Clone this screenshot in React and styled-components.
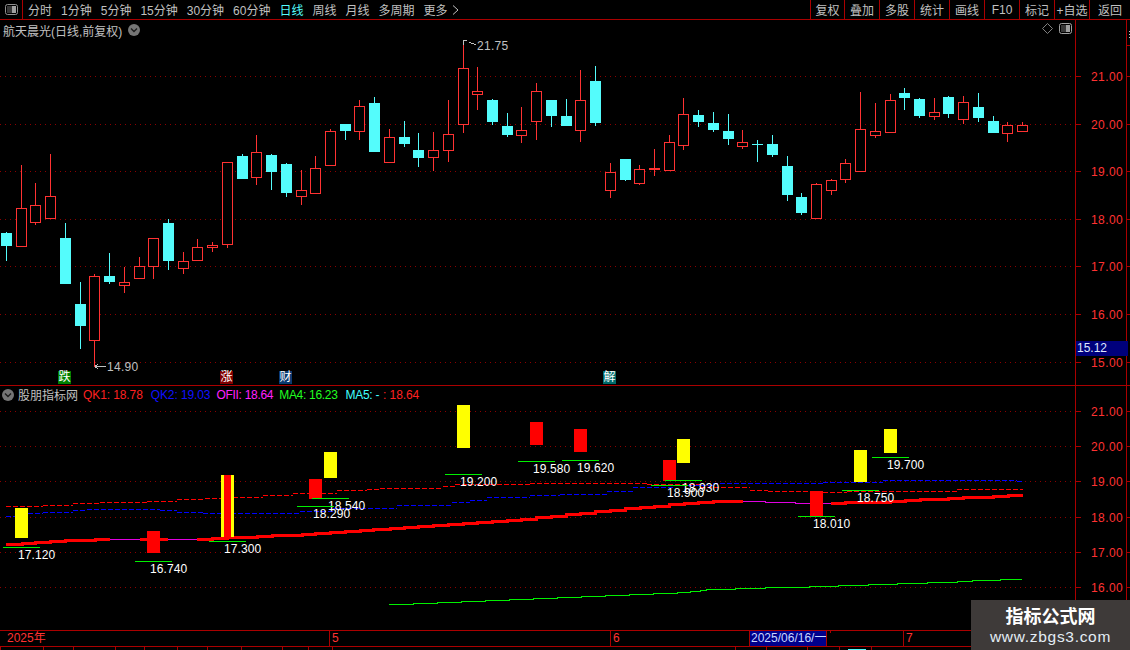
import React from 'react';
import styled, { createGlobalStyle } from 'styled-components';

const RED_LINE = '#aa0000';
const UP = '#ff3232';
const DOWN = '#54fcfc';
const GREY = '#c0c0c0';

const GlobalStyle = createGlobalStyle`
  html, body { margin: 0; padding: 0; background: #000; overflow: hidden; }
  body { font-family: "Liberation Sans", "Noto Sans CJK SC", sans-serif; }
`;

const Page = styled.div`
  position: relative;
  width: 1130px;
  height: 650px;
  display: flex;
  flex-direction: column;
  background: #000;
  overflow: hidden;
  font-size: 12px;
  color: ${GREY};
`;

// top toolbar
const Toolbar = styled.div`
  height: 19px;
  flex: none;
  display: flex;
  align-items: center;
  border-bottom: 1px solid ${RED_LINE};
`;

const IconCell = styled.div`
  width: 23px;
  height: 19px;
  display: flex;
  align-items: center;
  justify-content: center;
  border-right: 1px solid ${RED_LINE};
  box-sizing: border-box;
`;

const PeriodList = styled.div`
  display: flex;
  align-items: center;
  gap: 9px;
  padding-left: 5px;
  flex: 1;
`;

const Period = styled.span`
  color: ${p => (p.$active ? DOWN : GREY)};
  white-space: nowrap;
  display: flex;
  align-items: center;
  gap: 4px;
`;

const ToolButton = styled.div`
  width: ${p => p.$w}px;
  height: 19px;
  box-sizing: border-box;
  display: flex;
  align-items: center;
  justify-content: center;
  border-left: 1px solid ${RED_LINE};
  white-space: nowrap;
`;

// chart panels
const Panel = styled.div`
  position: relative;
  flex: none;
  height: ${p => p.$h}px;
  display: flex;
  border-bottom: 1px solid ${RED_LINE};
`;

const Plot = styled.svg`
  display: block;
  width: 1075px;
  height: 100%;
  flex: none;
  shape-rendering: crispEdges;
`;

const Axis = styled.svg`
  display: block;
  width: 55px;
  height: 100%;
  flex: none;
  shape-rendering: crispEdges;
`;

const ChartText = styled.text`
  font-family: "Liberation Sans", sans-serif;
  font-size: 12px;
  letter-spacing: ${p => p.$sp || 0}px;
  fill: ${p => p.$color || '#fff'};
  shape-rendering: auto;
`;

const TitleBar = styled.div`
  position: absolute;
  left: 3px;
  top: 1px;
  height: 18px;
  display: flex;
  align-items: center;
  gap: 6px;
  white-space: nowrap;
`;

const CornerIcons = styled.div`
  position: absolute;
  left: 1042px;
  top: 3px;
  display: flex;
  align-items: center;
  gap: 6px;
`;

const Legend = styled.div`
  position: absolute;
  left: 2px;
  top: 0;
  height: 17px;
  display: flex;
  align-items: center;
  white-space: nowrap;
`;

const LegendName = styled.span`
  margin: 0 5px 0 4px;
`;

const LegendValue = styled.span`
  color: ${p => p.$color};
  margin-right: ${p => p.$gap}px;
  letter-spacing: ${p => p.$sp || -0.1}px;
`;

const Tag = styled.div`
  position: absolute;
  left: ${p => p.$left}px;
  top: 351px;
  width: 13px;
  height: 13px;
  display: flex;
  align-items: center;
  justify-content: center;
  background: ${p => p.$bg};
  color: #fff;
  font-size: 12px;
  line-height: 13px;
`;

const PriceBox = styled.div`
  position: absolute;
  left: 1076px;
  top: 321px;
  width: 52px;
  height: 15px;
  padding-left: 1px;
  box-sizing: border-box;
  background: #00007c;
  color: #dfe8ff;
  line-height: 15px;
`;

// time axis
const TimeAxis = styled.div`
  height: 15px;
  flex: none;
  display: flex;
  border-bottom: 1px solid ${RED_LINE};
`;

const TimeCell = styled.div`
  width: ${p => p.$w}px;
  flex: none;
  box-sizing: border-box;
  padding-left: ${p => (p.$first ? 7 : 2)}px;
  border-left: ${p => (p.$first || p.$plain ? 0 : 1)}px solid ${RED_LINE};
  color: ${UP};
  line-height: 15px;
  white-space: nowrap;
  background: ${p => (p.$plain ? `linear-gradient(${RED_LINE}, ${RED_LINE}) 3px 0 / 1px 2px no-repeat` : 'none')};
`;

const DateCell = styled.div`
  width: 78px;
  flex: none;
  box-sizing: border-box;
  padding-left: 1px;
  background: #00008c;
  border-left: 1px solid ${RED_LINE};
  border-right: 1px solid ${RED_LINE};
  color: #c8d8ff;
  line-height: 15px;
  white-space: nowrap;
`;

const TabStrip = styled.div`
  height: 3px;
  flex: none;
  display: flex;
`;

const Tab = styled.div`
  width: ${p => p.$w}px;
  flex: none;
  box-sizing: border-box;
  border-left: 1px solid ${RED_LINE};
  background: ${p => (p.$active ? `linear-gradient(${DOWN}, ${DOWN}) 8px 2px / 18px 1px no-repeat` : 'none')};
`;

const Watermark = styled.div`
  position: absolute;
  left: 971px;
  top: 600px;
  width: 159px;
  height: 50px;
  padding-bottom: 2px;
  box-sizing: border-box;
  background: #3e3a39;
  display: flex;
  flex-direction: column;
  align-items: center;
  justify-content: center;
  gap: 1px;
`;

const WatermarkTitle = styled.div`
  color: #fff;
  font-size: 18px;
  font-weight: 700;
  line-height: 24px;
  font-family: "Noto Sans CJK SC", sans-serif;
`;

const WatermarkUrl = styled.div`
  color: #e4edf5;
  font-size: 15.5px;
  line-height: 18px;
  letter-spacing: 0.7px;
`;

// [x, high, bodyTop, bodyBottom, low, kind]  r = hollow red, c = solid cyan
const candles = [
  [6, 232, 233, 246, 261, 'c'], [21, 165, 208, 247, 247, 'r'], [35, 183, 205, 223, 225, 'r'],
  [50, 154, 196, 219, 219, 'r'], [65, 223, 238, 284, 284, 'c'], [80, 282, 304, 326, 349, 'c'],
  [94, 274, 276, 341, 367, 'r'], [109, 253, 276, 282, 284, 'c'], [124, 267, 282, 286, 293, 'r'],
  [139, 257, 266, 279, 279, 'r'], [153, 238, 238, 267, 279, 'r'], [168, 219, 223, 261, 270, 'c'],
  [183, 252, 261, 269, 274, 'r'], [197, 239, 247, 261, 261, 'r'], [212, 242, 245, 248, 252, 'r'],
  [227, 162, 162, 245, 248, 'r'], [242, 154, 156, 179, 179, 'c'], [256, 135, 152, 178, 185, 'r'],
  [271, 154, 155, 172, 190, 'c'], [286, 163, 164, 193, 197, 'c'], [301, 170, 190, 197, 205, 'r'],
  [315, 156, 168, 194, 194, 'r'], [330, 129, 131, 166, 166, 'r'], [345, 124, 124, 131, 140, 'c'],
  [359, 100, 106, 132, 140, 'r'], [374, 97, 103, 152, 152, 'c'], [389, 129, 137, 163, 163, 'r'],
  [404, 121, 137, 144, 147, 'c'], [418, 133, 150, 158, 167, 'c'], [433, 132, 150, 158, 171, 'r'],
  [448, 100, 134, 151, 162, 'r'], [463, 40, 68, 125, 133, 'r'], [477, 67, 91, 95, 110, 'r'],
  [492, 99, 100, 122, 125, 'c'], [507, 113, 126, 135, 137, 'c'], [521, 107, 130, 136, 143, 'r'],
  [536, 83, 91, 122, 140, 'r'], [551, 100, 100, 116, 127, 'c'], [566, 99, 116, 126, 126, 'c'],
  [580, 70, 100, 131, 142, 'r'], [595, 66, 81, 123, 126, 'c'], [610, 163, 172, 191, 198, 'r'],
  [625, 159, 159, 180, 181, 'c'], [639, 165, 169, 184, 185, 'r'], [654, 149, 168, 170, 176, 'r'],
  [669, 135, 142, 171, 171, 'r'], [683, 98, 114, 146, 150, 'r'], [698, 110, 115, 122, 127, 'c'],
  [713, 112, 123, 130, 132, 'c'], [728, 114, 131, 139, 145, 'c'], [742, 130, 142, 147, 149, 'r'],
  [757, 140, 144, 145, 162, 'c'], [772, 135, 144, 155, 157, 'c'], [787, 156, 166, 195, 201, 'c'],
  [801, 193, 197, 213, 215, 'c'], [816, 183, 184, 219, 219, 'r'], [831, 179, 180, 191, 195, 'r'],
  [845, 159, 163, 180, 183, 'r'], [860, 92, 129, 172, 172, 'r'], [875, 103, 131, 136, 138, 'r'],
  [890, 94, 100, 133, 133, 'r'], [904, 88, 93, 98, 110, 'c'], [919, 98, 99, 116, 118, 'c'],
  [934, 98, 112, 117, 120, 'r'], [948, 96, 97, 114, 118, 'c'], [963, 96, 102, 120, 124, 'r'],
  [978, 93, 107, 118, 122, 'c'], [993, 116, 121, 133, 133, 'c'], [1007, 122, 125, 134, 142, 'r'],
  [1022, 122, 125, 132, 132, 'r'],
];

const mainTicks = [[76, '21.00'], [124, '20.00'], [171, '19.00'], [219, '18.00'], [266, '17.00'], [314, '16.00'], [362, '15.00']];
const subTicks = [[411, '21.00'], [446, '20.00'], [481, '19.00'], [517, '18.00'], [552, '17.00'], [587, '16.00']];

// [x, y] vertices of a stepped line, last entry only closes the line
const thickRuns = [
  [[6, 544], [22, 543], [35, 542], [50, 541], [65, 540], [95, 539], [110, 539]],
  [[140, 539], [147, 539]],
  [[160, 539], [168, 539]],
  [[197, 539], [212, 538], [227, 537], [257, 536], [272, 535], [302, 534], [315, 533], [330, 532], [345, 531], [360, 530], [373, 529],
    [390, 528], [404, 527], [418, 526], [433, 525], [448, 524], [463, 523], [477, 522], [492, 521], [507, 520], [521, 519], [536, 517],
    [551, 516], [566, 514], [580, 513], [595, 511], [610, 510], [625, 508], [640, 507], [654, 506], [669, 504], [684, 503], [698, 502], [713, 501], [743, 501]],
  [[831, 503], [845, 502], [890, 501], [905, 500], [920, 499], [948, 498], [963, 497], [993, 496], [1008, 495], [1023, 495]],
];
const magentaRuns = [
  [[110, 539], [140, 539]],
  [[168, 539], [197, 539]],
  [[743, 501], [765, 502], [795, 503], [810, 503]],
  [[823, 503], [831, 503]],
];
const redDash = [[6, 506], [43, 505], [73, 503], [100, 502], [147, 501], [177, 499], [205, 498], [233, 497], [263, 495], [293, 493], [337, 490], [367, 489], [380, 488],
  [443, 486], [455, 484], [530, 483], [647, 484], [700, 487], [750, 490], [768, 491], [823, 492], [847, 491], [957, 489], [1023, 489]];
const blueDash = [[6, 516], [28, 513], [43, 512], [73, 510], [87, 509], [160, 510], [177, 512], [203, 513], [300, 511], [333, 508], [397, 505], [452, 502], [470, 500], [487, 497],
  [530, 495], [560, 494], [607, 491], [633, 487], [673, 485], [713, 483], [823, 482], [883, 480], [1017, 481], [1023, 481]];
const greenLine = [[389, 604], [413, 603], [437, 602], [461, 601], [485, 600], [509, 599], [533, 598], [557, 597], [581, 596], [605, 595], [629, 594], [653, 593], [677, 592], [690, 591],
  [700, 590], [706, 589], [735, 588], [765, 587], [809, 586], [838, 585], [868, 584], [897, 583], [927, 582], [957, 581], [972, 580], [1000, 579], [1022, 579]];

// [x, y, w, h, colour]
const bars = [
  [15, 508, 13, 30, '#ffff00'], [147, 531, 13, 22, '#ff0000'], [221, 475, 13, 62, '#ffff00'], [224, 475, 7, 62, '#ff0000'],
  [309, 479, 13, 20, '#ff0000'], [324, 452, 13, 26, '#ffff00'], [457, 405, 13, 43, '#ffff00'], [530, 422, 13, 23, '#ff0000'],
  [574, 429, 13, 23, '#ff0000'], [663, 460, 13, 21, '#ff0000'], [677, 439, 13, 24, '#ffff00'], [810, 491, 13, 26, '#ff0000'],
  [854, 450, 13, 32, '#ffff00'], [884, 429, 13, 24, '#ffff00'],
];

// [lineX1, lineX2, lineY, textX, text]
const marks = [
  [3, 40, 547, 18, '17.120'], [135, 172, 561, 150, '16.740'], [209, 246, 541, 224, '17.300'], [312, 349, 498, 328, '18.540'],
  [297, 334, 506, 313, '18.290'], [445, 482, 474, 460, '19.200'], [518, 555, 461, 533, '19.580'], [562, 599, 460, 577, '19.620'],
  [665, 702, 480, 682, '18.930'], [651, 688, 485, 667, '18.900'], [798, 835, 516, 813, '18.010'], [842, 879, 490, 857, '18.750'],
  [872, 909, 457, 887, '19.700'],
];

const stepPath = pts => pts.map(([x, y], i) => (i === 0 ? `M${x} ${y + 0.5}` : `H${x}V${y + 0.5}`)).join('');

// dashes as solid 1px pieces, 5 on 2 off, following the steps of the line
const dashPieces = pts => {
  const pieces = [];
  for (let i = 0; i < pts.length - 1; i++) {
    const [x1, y] = pts[i];
    const x2 = pts[i + 1][0];
    for (let x = x1; x < x2; x += 7) pieces.push([x, y, Math.min(5, x2 - x)]);
  }
  return pieces;
};

const DashLine = ({ points, color }) =>
  dashPieces(points).map(([x, y, w]) => <rect key={x} x={x} y={y} width={w} height="1" fill={color} />);

const PanelIcon = ({ bright }) => (
  <svg width="13" height="11" viewBox="0 0 13 11">
    <rect x="0.5" y="0.5" width="12" height="10" rx="2" fill="#000" stroke={bright ? '#a0a0a0' : '#909090'} />
    <rect x="7" y="2" width="4" height="7" fill="#a0a0a0" />
    <rect x="2" y="2" width="5" height="7" fill="#383838" />
  </svg>
);

const RoundArrow = () => (
  <svg width="12" height="12" viewBox="0 0 12 12">
    <circle cx="6" cy="6" r="6" fill="#757575" />
    <path d="M3 4.5L6 7.5L9 4.5" fill="none" stroke="#1c1c1c" strokeWidth="1.4" />
  </svg>
);

const Candle = ({ c }) => {
  const [x, high, top, bottom, low, kind] = c;
  const color = kind === 'r' ? UP : DOWN;
  return (
    <g>
      <rect x={x} y={high} width="1" height={low - high} fill={color} />
      {kind === 'r' ? (
        <rect x={x - 4.5} y={top + 0.5} width="10" height={bottom - top - 1} fill="#000" stroke={color} />
      ) : (
        <rect x={x - 5} y={top} width="11" height={bottom - top} fill={color} />
      )}
    </g>
  );
};

const GridLines = ({ ticks }) =>
  ticks.map(([y]) => <line key={y} x1="0" x2="1075" y1={y + 0.5} y2={y + 0.5} stroke="#8c0000" strokeDasharray="1 4" />);

const AxisTicks = ({ ticks }) => (
  <>
    <rect x="1075" y="0" width="1" height="650" fill={RED_LINE} />
    <rect x="1126" y="0" width="1" height="650" fill={RED_LINE} />
    {ticks.map(([y, label]) => (
      <g key={y}>
        <rect x="1075" y={y} width="6" height="1" fill={RED_LINE} />
        <rect x="1126" y={y} width="4" height="1" fill={RED_LINE} />
        <ChartText x="1091" y={y + 5} $color={UP} $sp={0.4}>{label}</ChartText>
      </g>
    ))}
  </>
);

const periods = ['分时', '1分钟', '5分钟', '15分钟', '30分钟', '60分钟', '日线', '周线', '月线', '多周期'];
const tools = [['复权', 34], ['叠加', 35], ['多股', 35], ['统计', 35], ['画线', 35], ['F10', 35], ['标记', 35], ['+自选', 35], ['返回', 41]];
const tabs = [43, 30, 42, 29, 33, 30, 34, 41, 26, 24, 403, 31, 41, 32, 32, 259];
const ACTIVE_TAB = 14;

export default function App() {
  return (
    <Page>
      <GlobalStyle />
      <Toolbar>
        <IconCell><PanelIcon /></IconCell>
        <PeriodList>
          {periods.map(p => <Period key={p} $active={p === '日线'}>{p}</Period>)}
          <Period>
            更多
            <svg width="7" height="10" viewBox="0 0 7 10">
              <path d="M1 0.5L6 5L1 9.5" fill="none" stroke={GREY} />
            </svg>
          </Period>
        </PeriodList>
        {tools.map(([t, w]) => <ToolButton key={t} $w={w}>{t}</ToolButton>)}
      </Toolbar>

      <Panel $h={365}>
        <Plot viewBox="0 20 1075 365">
          <GridLines ticks={mainTicks} />
          {candles.map(c => <Candle key={c[0]} c={c} />)}
          <path d="M463.5 40L463.5 45M464 40.5H467M469 42L472 43.5L476 44.5" fill="none" stroke={GREY} />
          <ChartText x="477" y="50" $color={GREY} $sp={0.3}>21.75</ChartText>
          <path d="M95 366.5H106M95 366.5L98 364M95 366.5L98 369" fill="none" stroke={GREY} />
          <ChartText x="107" y="371" $color={GREY} $sp={0.3}>14.90</ChartText>
        </Plot>
        <Axis viewBox="1075 20 55 365">
          <AxisTicks ticks={mainTicks} />
          <rect x="1129" y="31" width="1" height="1" fill={GREY} />
          <rect x="1129" y="34" width="1" height="1" fill={GREY} />
          <rect x="1129" y="37" width="1" height="1" fill={GREY} />
          <rect x="1126" y="45" width="4" height="1" fill={RED_LINE} />
        </Axis>
        <TitleBar>
          航天晨光(日线,前复权)
          <RoundArrow />
        </TitleBar>
        <CornerIcons>
          <svg width="11" height="11" viewBox="0 0 11 11">
            <path d="M5.5 0.5L10.5 5.5L5.5 10.5L0.5 5.5Z" fill="none" stroke="#808080" />
          </svg>
          <PanelIcon bright />
        </CornerIcons>
        <Tag $left={58} $bg="#008000">跌</Tag>
        <Tag $left={220} $bg="#800000">涨</Tag>
        <Tag $left={279} $bg="#0a3a70">财</Tag>
        <Tag $left={603} $bg="#006a6a">解</Tag>
        <PriceBox>15.12</PriceBox>
      </Panel>

      <Panel $h={244}>
        <Plot viewBox="0 386 1075 244">
          <GridLines ticks={subTicks} />
          <DashLine points={redDash} color="#ff0000" />
          <DashLine points={blueDash} color="#0000ff" />
          <path d={stepPath(greenLine)} fill="none" stroke="#00f000" />
          {magentaRuns.map((r, i) => <path key={i} d={stepPath(r)} fill="none" stroke="#e000e0" />)}
          {thickRuns.map((r, i) => <path key={i} d={stepPath(r)} fill="none" stroke="#ff0000" strokeWidth="3" />)}
          {bars.map(([x, y, w, h, color], i) => <rect key={i} x={x} y={y} width={w} height={h} fill={color} />)}
          {marks.map(([x1, x2, y, tx, text]) => (
            <g key={text}>
              <rect x={x1} y={y} width={x2 - x1} height="1" fill="#00f000" />
              <ChartText x={tx} y={y + 12} $sp={0.1}>{text}</ChartText>
            </g>
          ))}
        </Plot>
        <Axis viewBox="1075 386 55 244">
          <AxisTicks ticks={subTicks} />
        </Axis>
        <Legend>
          <RoundArrow />
          <LegendName>股朋指标网</LegendName>
          <LegendValue $color="#ff2020" $gap={8}>QK1: 18.78</LegendValue>
          <LegendValue $color="#1010ff" $gap={6}>QK2: 19.03</LegendValue>
          <LegendValue $color="#ff20ff" $gap={6} $sp={-0.3}>OFII: 18.64</LegendValue>
          <LegendValue $color="#20ff20" $gap={8} $sp={-0.3}>MA4: 16.23</LegendValue>
          <LegendValue $color="#40ffff" $gap={4} $sp={-0.3}>MA5: -</LegendValue>
          <LegendValue $color="#ff2020" $gap={0}>: 18.64</LegendValue>
        </Legend>
      </Panel>

      <TimeAxis>
        <TimeCell $first $w={329}>2025年</TimeCell>
        <TimeCell $w={281}>5</TimeCell>
        <TimeCell $w={139}>6</TimeCell>
        <DateCell>2025/06/16/一</DateCell>
        <TimeCell $plain $w={76} />
        <TimeCell $w={228}>7</TimeCell>
      </TimeAxis>
      <TabStrip>
        {tabs.map((w, i) => <Tab key={i} $w={w} $active={i === ACTIVE_TAB} />)}
      </TabStrip>

      <Watermark>
        <WatermarkTitle>指标公式网</WatermarkTitle>
        <WatermarkUrl>www.zbgs3.com</WatermarkUrl>
      </Watermark>
    </Page>
  );
}
